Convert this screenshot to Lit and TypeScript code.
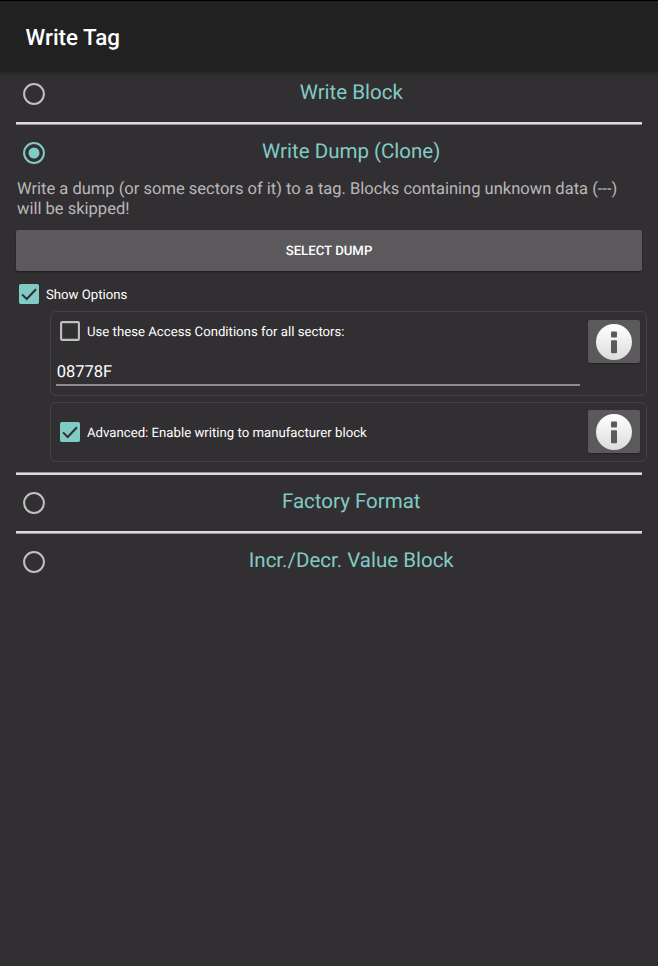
import { LitElement, html, svg, css } from "lit";
import { customElement, property } from "lit/decorators.js";
import { classMap } from "lit/directives/class-map.js";

@customElement("radio-row")
class RadioRow extends LitElement {
  @property() label = "";
  @property({ type: Boolean }) checked = false;

  static styles = css`
    :host { display: flex; height: 46px; align-items: center; }
    svg { flex: none; width: 22px; height: 22px; margin: 1px 0 0 6.5px; color: #c1c0c1; }
    svg.on { color: #80cbc4; }
    .label {
      flex: 1; margin: -1px 0 0 16px; text-align: center;
      font-size: 20.5px; line-height: 26px; color: #80cbc4; white-space: nowrap;
    }
  `;

  render() {
    return html`
      <svg class=${classMap({ on: this.checked })} viewBox="0 0 22 22">
        <circle cx="11" cy="11" r="9.9" fill="none" stroke="currentColor" stroke-width="2" />
        ${this.checked ? svg`<circle cx="11" cy="11" r="5.5" fill="currentColor" />` : null}
      </svg>
      <div class="label">${this.label}</div>
    `;
  }
}

@customElement("check-option")
class CheckOption extends LitElement {
  @property() label = "";
  @property({ type: Boolean }) checked = false;

  static styles = css`
    :host { display: flex; align-items: center; height: 20px; }
    svg { flex: none; width: 20px; height: 20px; }
    .label { margin: 3px 0 0 7px; font-size: 13.2px; line-height: 20px; color: #fff; white-space: nowrap; }
  `;

  render() {
    return html`
      <svg viewBox="0 0 20 20">
        ${this.checked
          ? svg`<rect width="20" height="20" rx="1.8" fill="#80cbc4" />
              <path d="M3 10.4 L7.7 15 L17 5.3" fill="none" stroke="#322f32" stroke-width="2" />`
          : svg`<rect x="1.1" y="1.1" width="17.8" height="17.8" rx="1" fill="none" stroke="#c1c0c1" stroke-width="2.1" />`}
      </svg>
      <div class="label">${this.label}</div>
    `;
  }
}

@customElement("info-button")
class InfoButton extends LitElement {
  static styles = css`
    :host {
      display: flex; flex: none; width: 52px; height: 43px; align-items: center; justify-content: center;
      background: #5b595c; border-radius: 2px; box-shadow: 0 1px 2px rgba(0, 0, 0, 0.3);
    }
    svg { width: 36px; height: 36px; }
  `;

  render() {
    return html`
      <svg viewBox="0 0 36 36">
        <defs>
          <linearGradient id="face" x1="0" y1="0" x2="0" y2="1">
            <stop offset="0" stop-color="#fff" />
            <stop offset="1" stop-color="#dddcdd" />
          </linearGradient>
        </defs>
        <circle cx="18" cy="18" r="18" fill="url(#face)" />
        <rect x="15" y="7.5" width="6" height="6.1" rx="1" fill="#5b595c" />
        <rect x="15" y="16.2" width="6" height="13.1" rx="1" fill="#5b595c" />
      </svg>
    `;
  }
}

@customElement("app-root")
class AppRoot extends LitElement {
  static styles = css`
    :host {
      display: flex; flex-direction: column; box-sizing: border-box; height: 966px;
      background: #322f32; font-family: Roboto, sans-serif; color: #fff; overflow: hidden;
      text-rendering: geometricPrecision;
    }
    header {
      flex: none; box-sizing: border-box; height: 71px; padding: 4px 26px 0 25.5px; border-top: 1px solid #000;
      display: flex; align-items: center; background: #212121;
      font-size: 22.4px; font-weight: 500; box-shadow: 0 2px 4px rgba(0, 0, 0, 0.35);
    }
    main { display: flex; flex-direction: column; padding: 0 16px; }
    .first { margin-top: -0.5px; }
    .rule { box-sizing: border-box; height: 3px; margin: 5.5px 0 4px; background: #dddbdd; border-bottom: 1px solid #969496; }
    .rule.flip { margin-top: 10px; margin-bottom: 4px; border-bottom: none; border-top: 1px solid #969496; }
    .rule.last { margin-top: 6px; margin-bottom: 4px; }
    .text { margin: 5px 0 0 1px; font-size: 16.52px; line-height: 20px; color: #b9b8b9; white-space: nowrap; }
    .button {
      box-sizing: border-box; padding-top: 2px;
      margin-top: 10px; height: 41px; display: flex; align-items: center; justify-content: center;
      background: #5b595c; border-radius: 2px; box-shadow: 0 1px 2px rgba(0, 0, 0, 0.45);
      font-size: 13.2px; font-weight: 500;
    }
    .show { margin: 13px 0 0 3px; }
    .card {
      box-sizing: border-box; display: flex; justify-content: space-between;
      margin: 7px -5px 0 34px; border: 1px solid #434144; border-radius: 6px; padding: 7px 6px 0 5px;
    }
    .tall { height: 85px; padding-top: 8px; }
    .low { height: 60px; margin-top: 6px; }
    .fields { width: 524px; padding-top: 1px; }
    .fields check-option { margin-left: 4px; }
    .low check-option { margin: 12px 0 0 4px; }
    .input {
      box-sizing: border-box; margin-top: 22px; height: 23px; padding-left: 0.7px; border-bottom: 2px solid #8d8b8d;
      font-size: 16.5px; line-height: 20px;
    }
  `;

  render() {
    return html`
      <header>Write Tag</header>
      <main>
        <radio-row class="first" label="Write Block"></radio-row>
        <div class="rule"></div>
        <radio-row label="Write Dump (Clone)" checked></radio-row>
        <div class="text">Write a dump (or some sectors of it) to a tag. Blocks containing unknown data (---)<br />will be skipped!</div>
        <div class="button">SELECT DUMP</div>
        <check-option class="show" label="Show Options" checked></check-option>
        <section class="card tall">
          <div class="fields">
            <check-option label="Use these Access Conditions for all sectors:"></check-option>
            <div class="input">08778F</div>
          </div>
          <info-button></info-button>
        </section>
        <section class="card low">
          <check-option label="Advanced: Enable writing to manufacturer block" checked></check-option>
          <info-button></info-button>
        </section>
        <div class="rule flip"></div>
        <radio-row label="Factory Format"></radio-row>
        <div class="rule last"></div>
        <radio-row label="Incr./Decr. Value Block"></radio-row>
      </main>
    `;
  }
}
